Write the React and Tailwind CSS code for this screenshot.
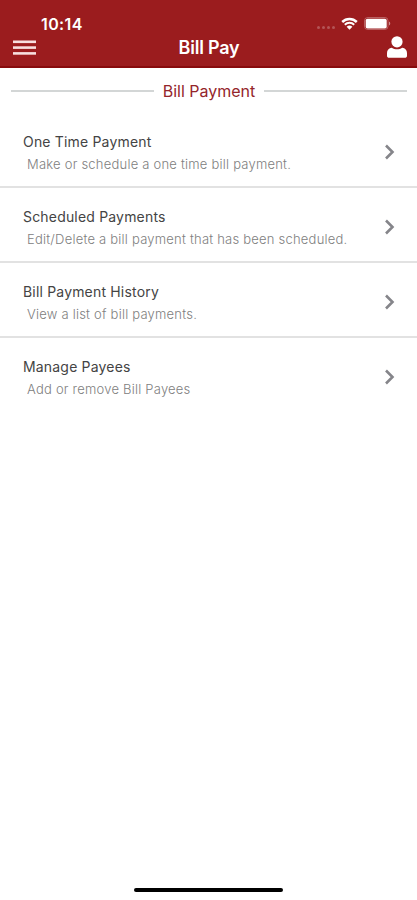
const menuItems = [
  {
    title: 'One Time Payment',
    description: 'Make or schedule a one time bill payment.',
  },
  {
    title: 'Scheduled Payments',
    description: 'Edit/Delete a bill payment that has been scheduled.',
  },
  {
    title: 'Bill Payment History',
    description: 'View a list of bill payments.',
  },
  {
    title: 'Manage Payees',
    description: 'Add or remove Bill Payees',
  },
];

function MenuIcon() {
  return (
    <svg className="h-[15px] w-[23px]" viewBox="0 0 23 15" fill="#f8dfdf">
      <rect y="0.5" width="23" height="2.6" />
      <rect y="6.3" width="23" height="2.6" />
      <rect y="12.1" width="23" height="2.6" />
    </svg>
  );
}

function WifiIcon() {
  return (
    <svg className="h-[13px] w-[17px]" viewBox="0 0 17 13" fill="none" stroke="white">
      <path d="M1.2 5a10.4 10.4 0 0 1 14.6 0" strokeWidth="2.5" />
      <path d="M3.8 7.8a6.7 6.7 0 0 1 9.4 0" strokeWidth="2" />
      <path d="M8.5 12.8 5.6 9.8a4.2 4.2 0 0 1 5.8 0z" fill="white" stroke="none" />
    </svg>
  );
}

function BatteryIcon() {
  return (
    <svg className="h-[13px] w-[27px]" viewBox="0 0 27 13">
      <rect x="0.5" y="0.5" width="23.5" height="12" rx="3.2" fill="none" stroke="white" strokeOpacity="0.3" />
      <rect x="1.7" y="1.7" width="21" height="9.8" rx="1.8" fill="white" />
      <path d="M25 4.5c1.7.6 1.7 3.4 0 4z" fill="white" fillOpacity="0.5" />
    </svg>
  );
}

function UserIcon() {
  return (
    <svg className="h-[22px] w-5" viewBox="0 0 20 22" fill="white">
      <circle cx="10" cy="5.8" r="5.6" />
      <path d="M4.8 11.8c3.2 2 7.2 2 10.4 0 3 .3 4.8 2.3 4.8 5.2v2.7c0 1.4-.9 2.1-2.3 2.1H2.3C.9 21.8 0 21.1 0 19.7V17c0-2.9 1.8-4.9 4.8-5.2z" />
    </svg>
  );
}

function StatusBar() {
  return (
    <div className="flex h-9 items-start justify-between pl-[41px] pr-[26px] pt-[14px]">
      <span className="text-[16px] font-semibold leading-5 tracking-[0.4px]">10:14</span>
      <div className="flex items-start pt-[3px]">
        <div className="mr-1.5 mt-[9px] flex gap-[2px]">
          {[0, 1, 2, 3].map((dot) => (
            <span className="h-[3px] w-[3px] rounded-full bg-white/25" key={dot} />
          ))}
        </div>
        <WifiIcon />
        <div className="ml-[6px]">
          <BatteryIcon />
        </div>
      </div>
    </div>
  );
}

function Header() {
  return (
    <header className="h-[68px] border-b-2 border-[#880b0d] bg-[#9b1c1e] text-white">
      <StatusBar />
      <div className="grid grid-cols-[1fr_auto_1fr] items-start pl-[13px] pr-[10px]">
        <button className="mt-1 justify-self-start" type="button" aria-label="Menu">
          <MenuIcon />
        </button>
        <h1 className="-ml-[2px] text-[18px] font-semibold leading-[23px] tracking-[-0.2px]">Bill Pay</h1>
        <button className="justify-self-end" type="button" aria-label="Profile">
          <UserIcon />
        </button>
      </div>
    </header>
  );
}

function MenuItem({ item }) {
  return (
    <li className="flex h-[75px] items-center justify-between border-b-2 border-[#e2e2e2] pl-[23px] pr-[21px] last:border-transparent">
      <div className="pt-1.5">
        <p className="text-[14px] leading-6 tracking-[0.18px] text-[#444444]">{item.title}</p>
        <p className="pl-1 text-[13px] font-light leading-[21px] tracking-[0.22px] text-[#808080]">
          {item.description}
        </p>
      </div>
      <svg className="mt-1 h-4 w-3" viewBox="0 0 12 16" fill="none" stroke="#85858a" strokeWidth="2.6">
        <path d="m2 1.5 6.5 6.5L2 14.5" />
      </svg>
    </li>
  );
}

function App() {
  return (
    <div className="flex h-[900px] w-full flex-col overflow-hidden bg-white font-[Inter,sans-serif]">
      <Header />
      <div className="flex h-[45px] items-center gap-[9px] pl-[11px] pr-[10px]">
        <span className="h-[2px] flex-1 bg-[#d3d6d6]" />
        <h2 className="text-[16px] leading-6 text-[#94252b]">Bill Payment</h2>
        <span className="h-[2px] flex-1 bg-[#d3d6d6]" />
      </div>
      <ul>
        {menuItems.map((item) => (
          <MenuItem item={item} key={item.title} />
        ))}
      </ul>
      <div className="mx-auto mb-2 mt-auto h-1 w-[149px] rounded-full bg-black" />
    </div>
  );
}

export default App;
